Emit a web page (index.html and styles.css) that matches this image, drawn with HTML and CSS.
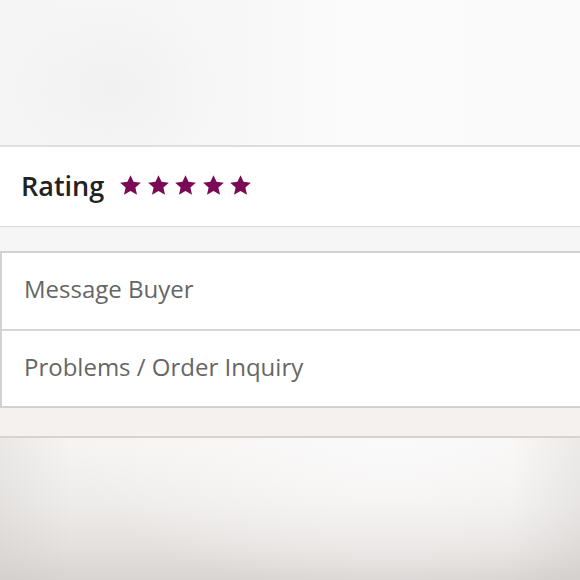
FILE: index.html
```html
<!DOCTYPE html>
<html>
<head>
<meta charset="utf-8">
<link rel="stylesheet" href="styles.css">
</head>
<body>
<div class="page">
  <div class="hero"></div>
  <div class="rating">
    <span class="rating-label">Rating</span>
    <div class="stars">
      <svg class="star" viewBox="0 0 24 24"><path d="M12 1.2l3.2 7 7.6.8-5.7 5.1 1.7 7.6L12 17.8l-6.8 3.9 1.7-7.6-5.7-5.1 7.6-.8z"/></svg>
      <svg class="star" viewBox="0 0 24 24"><path d="M12 1.2l3.2 7 7.6.8-5.7 5.1 1.7 7.6L12 17.8l-6.8 3.9 1.7-7.6-5.7-5.1 7.6-.8z"/></svg>
      <svg class="star" viewBox="0 0 24 24"><path d="M12 1.2l3.2 7 7.6.8-5.7 5.1 1.7 7.6L12 17.8l-6.8 3.9 1.7-7.6-5.7-5.1 7.6-.8z"/></svg>
      <svg class="star" viewBox="0 0 24 24"><path d="M12 1.2l3.2 7 7.6.8-5.7 5.1 1.7 7.6L12 17.8l-6.8 3.9 1.7-7.6-5.7-5.1 7.6-.8z"/></svg>
      <svg class="star" viewBox="0 0 24 24"><path d="M12 1.2l3.2 7 7.6.8-5.7 5.1 1.7 7.6L12 17.8l-6.8 3.9 1.7-7.6-5.7-5.1 7.6-.8z"/></svg>
    </div>
  </div>
  <div class="spacer"></div>
  <div class="menu">
    <div class="menu-item">Message Buyer</div>
    <div class="menu-item">Problems / Order Inquiry</div>
  </div>
  <div class="band"></div>
  <div class="footer"></div>
</div>
</body>
</html>
```
FILE: styles.css
```css
html, body {
  margin: 0;
  padding: 0;
}
body {
  width: 580px;
  height: 580px;
  overflow: hidden;
  font-family: "Open Sans", "Liberation Sans", sans-serif;
  background: #f6f5f5;
}
.page {
  display: flex;
  flex-direction: column;
  height: 580px;
}
.hero {
  height: 145px;
  background:
    radial-gradient(ellipse 110px 90px at 110px 88px, #f2f1f1 0%, rgba(242,241,241,0) 100%),
    linear-gradient(90deg, #f6f5f5 0%, #f8f7f7 40%, #fbfbfb 60%, #fbfafa 100%);
  border-bottom: 2px solid #e0dedd;
}
.rating {
  height: 80px;
  background: #fff;
  border-bottom: 1px solid #dcdad9;
  display: flex;
  align-items: center;
  padding-left: 21px;
  padding-bottom: 3px;
  box-sizing: border-box;
}
.rating-label {
  font-size: 27px;
  font-weight: 600;
  color: #222;
  margin-right: 15px;
}
.stars {
  display: flex;
  gap: 4.5px;
}
.star {
  width: 23px;
  height: 23px;
  fill: #7a0a55;
}
.spacer {
  height: 24px;
  background: #f7f6f6;
}
.menu {
  background: #fff;
  border: 2px solid #d3d1d0;
  border-right: none;
}
.menu-item {
  height: 76px;
  display: flex;
  align-items: center;
  padding-left: 22px;
  padding-bottom: 5px;
  box-sizing: border-box;
  font-size: 24px;
  color: #666;
}
.menu-item + .menu-item {
  border-top: 2px solid #d8d6d5;
  height: 77px;
}
.band {
  height: 28px;
  background: #f4f1ee;
  border-bottom: 2px solid #d6d3d1;
}
.footer {
  flex: 1;
  background:
    linear-gradient(90deg, rgba(200,196,194,0.25) 0%, rgba(200,196,194,0) 12%, rgba(200,196,194,0) 88%, rgba(200,196,194,0.25) 100%),
    radial-gradient(ellipse 320px 160px at 390px 0px, #fbfafa 0%, rgba(251,250,250,0) 100%),
    linear-gradient(180deg, #f6f5f4 0%, #eeecea 45%, #e3dfdd 80%, #d8d4d2 100%);
}
```
